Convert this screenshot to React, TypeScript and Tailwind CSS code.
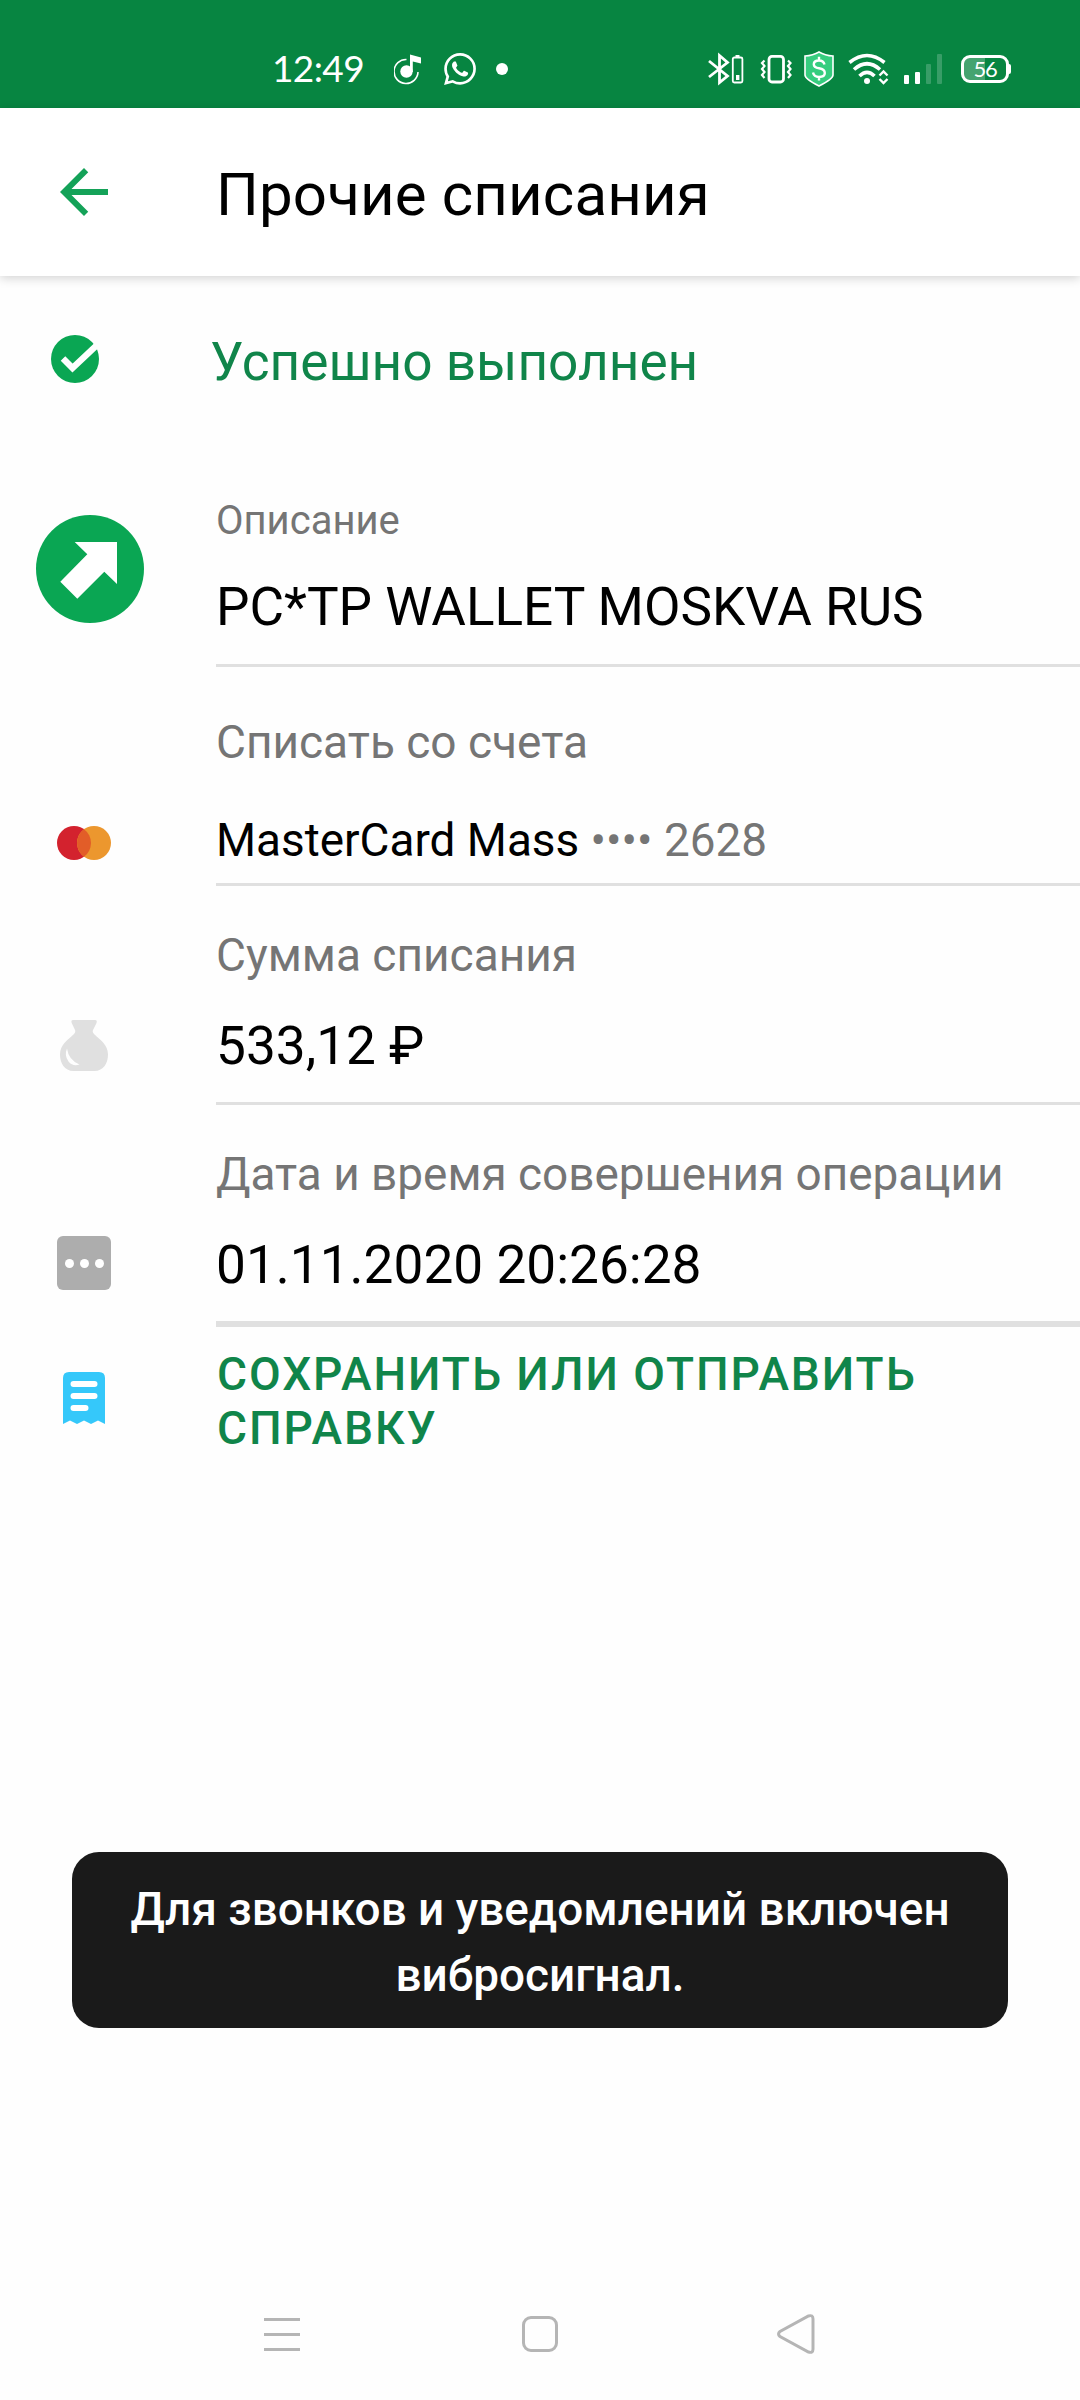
import React from 'react';

const rows = [
  {
    id: 'description',
    label: 'Описание',
    value: <>PC*TP WALLET MOSKVA RUS</>,
    icon: <OutgoingIcon />,
    row: 'h-[227px]',
    iconBox: 'pl-9 pt-[75px]',
    body: 'gap-[30px] border-b-3 pt-[57px]',
    labelText: 'text-[40px] leading-[48px]',
    valueText: 'text-[53.1px] leading-[64px]',
  },
  {
    id: 'account',
    label: 'Списать со счета',
    value: (
      <>
        MasterCard Mass <span className="text-[#757575]">•••• 2628</span>
      </>
    ),
    icon: <MasterCardIcon />,
    row: 'h-[219px]',
    iconBox: 'pl-[57px] pt-[159px]',
    body: 'gap-11 border-b-3 pt-12',
    labelText: 'text-[46px] leading-[54px]',
    valueText: 'text-[45.9px] leading-[54px]',
  },
  {
    id: 'amount',
    label: 'Сумма списания',
    value: <>533,12 ₽</>,
    icon: <BagIcon />,
    row: 'h-[219px]',
    iconBox: 'pl-[60px] pt-[134px]',
    body: 'gap-8 border-b-3 pt-[42px]',
    labelText: 'text-[46px] leading-[54px]',
    valueText: 'text-[53.2px] leading-[64px]',
  },
  {
    id: 'date',
    label: 'Дата и время совершения операции',
    value: <>01.11.2020 20:26:28</>,
    icon: <DotsIcon />,
    row: 'h-[222px]',
    iconBox: 'pl-[57px] pt-[131px]',
    body: 'gap-8 border-b-6 pt-[42px]',
    labelText: 'text-[45.9px] leading-[54px]',
    valueText: 'text-[53.2px] leading-[64px]',
  },
];

export default function App() {
  return (
    <div className="relative flex h-[2400px] w-[1080px] flex-col overflow-hidden bg-[#fefefe] font-['Roboto',sans-serif] text-black">
      <StatusBar />

      {/* Header */}
      <header className="z-10 flex h-[168px] shrink-0 items-start bg-white shadow-[0_2px_10px_rgba(0,0,0,0.18)]">
        <button className="ml-12 mt-12" aria-label="Назад">
          <svg className="size-[72px] fill-[#14a258]" viewBox="0 0 24 24">
            <path d="M20 11H7.83l5.59-5.59L12 4l-8 8 8 8 1.41-1.41L7.83 13H20z" />
          </svg>
        </button>
        <h1 className="ml-24 mt-[51px] text-[60px] leading-[72px] tracking-[0.15px]">
          Прочие списания
        </h1>
      </header>

      {/* Result */}
      <div className="flex h-[164px] shrink-0 items-start">
        <svg className="ml-[51px] mt-[59px] size-12" viewBox="0 0 48 48">
          <circle cx="24" cy="24" r="24" fill="#0aa653" />
          <path
            d="M12 23.5l9.5 9.500L47 9"
            fill="none"
            stroke="#fefefe"
            strokeWidth="6.400"
          />
        </svg>
        <p className="ml-[111px] mt-[54px] text-[53.2px] leading-[64px] text-[#10854a]">
          Успешно выполнен
        </p>
      </div>

      {/* Details */}
      {rows.map((item) => (
        <section key={item.id} className={`flex shrink-0 ${item.row}`}>
          <div className={`w-[216px] shrink-0 ${item.iconBox}`}>
            {item.icon}
          </div>
          <div
            className={`flex flex-1 flex-col border-[#e0e0e0] whitespace-nowrap ${item.body}`}
          >
            <p className={`text-[#757575] ${item.labelText}`}>{item.label}</p>
            <p className={item.valueText}>{item.value}</p>
          </div>
        </section>
      ))}

      {/* Receipt action */}
      <button className="flex items-start text-left">
        <span className="w-[217px] shrink-0 pl-[63px] pt-[45px]">
          <ReceiptIcon />
        </span>
        <span className="w-[760px] pt-5 text-[46px] leading-[54px] font-medium tracking-[1.95px] text-[#10854a]">
          СОХРАНИТЬ ИЛИ ОТПРАВИТЬ СПРАВКУ
        </span>
      </button>

      {/* Toast */}
      <div className="absolute inset-x-[72px] top-[1852px] h-44 rounded-[27px] bg-[#1a1a1a] px-10 pt-[24px] text-center text-[45.9px] leading-[66px] font-medium text-white">
        Для звонков и уведомлений включен вибросигнал.
      </div>

      {/* Navigation bar */}
      <nav className="mt-auto flex h-[132px] shrink-0 items-center pl-[264px]">
        <div className="flex w-9 flex-col gap-3">
          <span className="h-[3px] bg-[#b5b5b5]" />
          <span className="h-[3px] bg-[#b5b5b5]" />
          <span className="h-[3px] bg-[#b5b5b5]" />
        </div>
        <div className="ml-[222px] size-9 rounded-[9px] border-3 border-[#b5b5b5]" />
        <svg
          className="ml-[219px] h-10 w-[38px] fill-none stroke-[#b5b5b5] stroke-3"
          viewBox="0 0 38 40"
        >
          <path d="M3 17.5Q0 20 3 22.5L31.5 38Q36 39.500 36 35V5Q36 .5 31.500 2Z" />
        </svg>
      </nav>
    </div>
  );
}

function StatusBar() {
  return (
    <div className="flex h-[108px] shrink-0 items-start bg-[#078541] pl-[272px] pt-[51px] text-white">
      <span className="-mt-[5px] w-[120px] font-['Lato',sans-serif] text-[37px] leading-[44px] tracking-[-0.6px]">
        12:49
      </span>

      {/* Music */}
      <svg className="ml-0.5 h-9 w-7" viewBox="0 0 28 36">
        <path
          d="M12.500 8.500A12 12 0 1 0 24 21"
          fill="none"
          stroke="#fff"
          strokeWidth="1.600"
        />
        <circle cx="12.500" cy="20.500" r="6.200" fill="#fff" />
        <path d="M16 3.500L27 6.500V12.500L18.800 10.500V21H16z" fill="#fff" />
      </svg>

      {/* WhatsApp */}
      <svg className="ml-[22px] mt-0.5 size-8" viewBox="0 0 24 24" fill="#fff">
        <path d="M17.472 14.382c-.297-.149-1.758-.867-2.030-.967-.273-.099-.471-.148-.670.150-.197.297-.767.966-.940 1.164-.173.199-.347.223-.644.075-.297-.150-1.255-.463-2.390-1.475-.883-.788-1.480-1.761-1.653-2.059-.173-.297-.018-.458.130-.606.134-.133.298-.347.446-.520.149-.174.198-.298.298-.497.099-.198.050-.371-.025-.520-.075-.149-.669-1.612-.916-2.207-.242-.579-.487-.500-.669-.510-.173-.008-.371-.010-.570-.010-.198 0-.520.074-.792.372-.272.297-1.040 1.016-1.040 2.479 0 1.462 1.065 2.875 1.213 3.074.149.198 2.096 3.200 5.077 4.487.709.306 1.262.489 1.694.625.712.227 1.360.195 1.871.118.571-.085 1.758-.719 2.006-1.413.248-.694.248-1.289.173-1.413-.074-.124-.272-.198-.570-.347m-5.421 7.403h-.004a9.870 9.870 0 01-5.031-1.378l-.361-.214-3.741.982.998-3.648-.235-.374a9.860 9.860 0 01-1.510-5.260c.001-5.450 4.436-9.884 9.888-9.884 2.640 0 5.122 1.030 6.988 2.898a9.825 9.825 0 012.893 6.994c-.003 5.450-4.437 9.884-9.885 9.884m8.413-18.297A11.815 11.815 0 0012.050 0C5.495 0 .160 5.335.157 11.892c0 2.096.547 4.142 1.588 5.945L.057 24l6.305-1.654a11.882 11.882 0 005.683 1.448h.005c6.554 0 11.890-5.335 11.893-11.893a11.821 11.821 0 00-3.480-8.413z" />
      </svg>
      <span className="ml-5 mt-3 size-3 rounded-full bg-white" />

      {/* Bluetooth with device battery */}
      <svg className="ml-[200px] h-9 w-9" viewBox="0 0 36 36" fill="none">
        <path
          d="M1 10L19.500 25L11.500 31.500V4.500L19.500 11.500L1 26"
          stroke="#fff"
          strokeWidth="2.800"
        />
        <rect x="24.800" y="6.500" width="9.600" height="25" rx="1.500" stroke="#fff" strokeWidth="1.800" />
        <path d="M27.500 5h4" stroke="#fff" strokeWidth="2" />
        <path d="M28 24h3.400v5H28z" fill="#fff" />
      </svg>

      {/* Vibration */}
      <svg className="ml-4 h-9 w-8" viewBox="0 0 32 36" fill="none" stroke="#fff">
        <rect x="9" y="5.400" width="14.500" height="25.600" rx="3" strokeWidth="2.800" />
        <path
          d="M4.500 9.500L2 12l2.500 3L2 18l2.500 3L2 24l2.500 3M28 9.500l2.500 2.500-2.500 3 2.500 3-2.500 3 2.500 3-2.500 3"
          strokeWidth="2.200"
        />
      </svg>

      {/* Payment protection */}
      <svg className="ml-3 h-9 w-[30px]" viewBox="0 0 30 36">
        <path
          d="M15 1Q21 4.500 29 5V24Q29 28 15 35Q1 28 1 24V5Q9 4.500 15 1Z"
          fill="#36cd7f"
          stroke="#fff"
          strokeWidth="1.600"
        />
        <path
          d="M20.500 13.500Q19.500 9.500 15 9.500Q9.800 9.500 9.800 13.200Q9.800 16.500 15 17.300Q20.800 18.300 20.800 22Q20.800 26 15 26Q10 26 9 21.500M15 5.800v4M15 25.500v4"
          fill="none"
          stroke="#fff"
          strokeWidth="2.400"
        />
      </svg>

      {/* Wi-Fi */}
      <svg className="ml-[14px] h-9 w-[42px]" viewBox="0 0 42 36" fill="none" stroke="#fff">
        <path d="M1.500 11.500Q19 -2.500 36.500 11.500" strokeWidth="3.600" />
        <path d="M6 18.500Q19 7 32 18.500" strokeWidth="3.600" />
        <path d="M11.500 25Q19 17.500 26.500 25" strokeWidth="3.600" />
        <circle cx="19" cy="30" r="3" fill="#fff" stroke="none" />
        <path d="M31.500 24.500l4-4 4 4M31.500 28l4 4 4-4" strokeWidth="2.400" />
      </svg>

      {/* Signal */}
      <div className="ml-3.5 mt-[3px] flex h-[30px] items-end gap-[6px]">
        <span className="h-[9px] w-[5px] rounded-[1px] bg-white" />
        <span className="h-3 w-[5px] rounded-[1px] bg-white" />
        <span className="h-5 w-[5px] rounded-[1px] bg-white/20" />
        <span className="h-[30px] w-[5px] rounded-[1px] bg-white/20" />
      </div>

      {/* Battery */}
      <div className="ml-[19px] mt-1 flex items-center">
        <div className="flex h-7 w-[48px] items-center justify-center rounded-[9px] border-3 border-white bg-linear-to-r from-white/25 from-50% to-transparent to-50% font-['Lato',sans-serif] text-[22px] leading-none tracking-[-1.2px]">
          56
        </div>
        <span className="h-2.5 w-0.5 rounded-r-full bg-white" />
      </div>
    </div>
  );
}

function OutgoingIcon() {
  return (
    <svg className="size-[108px]" viewBox="0 0 108 108">
      <circle cx="54" cy="54" r="54" fill="#0aa653" />
      <path d="M38.700 27H81V69L68.300 56.700 41.300 83.700 24.300 66.700 51.300 39.300Z" fill="#fff" />
    </svg>
  );
}

function MasterCardIcon() {
  return (
    <svg className="h-[34px] w-[54px]" viewBox="0 0 54 34">
      <circle cx="17" cy="17" r="17" fill="#d3222e" />
      <circle cx="37" cy="17" r="17" fill="#ec972e" />
      <path d="M27 3.250a17 17 0 0 1 0 27.500a17 17 0 0 1 0-27.500" fill="#e25d28" />
    </svg>
  );
}

function BagIcon() {
  return (
    <svg className="h-[51px] w-12" viewBox="0 0 48 51">
      <path
        d="M13 0H35Q37.500 0 36.500 3L33 10Q32 12 34.500 14.500C40 20 48 24.500 48 34.500C48 43 43.500 51 34.500 51H13.500C4.500 51 0 43 0 34.500C0 24.500 8 20 13.500 14.500Q16 12 15 10L11.700 3Q10.700 0 13 0Z"
        fill="#e0e0e0"
      />
      <path d="M7 28.500Q8.500 40 19.500 44.500Q13 47 8.500 41.500Q4 35.500 7 28.500Z" fill="#fefefe" />
    </svg>
  );
}

function DotsIcon() {
  return (
    <div className="flex size-[54px] items-center justify-center gap-1.5 rounded-[6px] bg-[#adadad]">
      <span className="size-[9px] rounded-full bg-white" />
      <span className="size-[9px] rounded-full bg-white" />
      <span className="size-[9px] rounded-full bg-white" />
    </div>
  );
}

function ReceiptIcon() {
  return (
    <svg className="h-[52px] w-[42px]" viewBox="0 0 42 52">
      <path
        d="M6 0H36Q42 0 42 6V52L35 48.500 28 52 21 48.500 14 52 7 48.500 0 52V6Q0 0 6 0Z"
        fill="#35c8fa"
      />
      <path
        d="M10.500 12h21M10.500 24h21M10.500 36h12"
        stroke="#fff"
        strokeWidth="6"
        strokeLinecap="round"
      />
    </svg>
  );
}
